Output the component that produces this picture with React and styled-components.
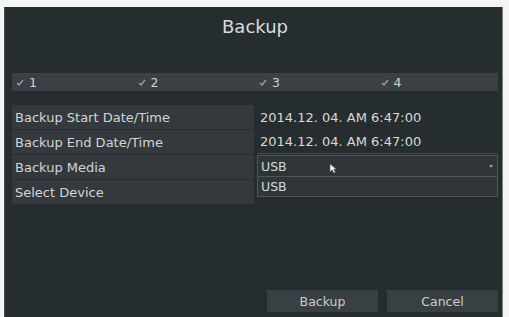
import React from "react";
import styled, { createGlobalStyle } from "styled-components";

const GlobalStyle = createGlobalStyle`
  html, body {
    margin: 0;
    padding: 0;
    background: #f3f4f3;
    font-family: "DejaVu Sans", "Liberation Sans", sans-serif;
  }
`;

const Page = styled.div`
  width: 509px;
  height: 317px;
  padding: 7px 6px 0 4px;
  box-sizing: border-box;
  overflow: hidden;
`;

const Panel = styled.div`
  height: 310px;
  background: #262d2f;
  border-left: 1px solid #4a5052;
  border-right: 1px solid #7a7f80;
  box-sizing: border-box;
  padding: 0 4px 0 7px;
  display: flex;
  flex-direction: column;
`;

const Title = styled.div`
  height: 40px;
  line-height: 40px;
  text-align: center;
  color: #d8dcdc;
  font-size: 18px;
  margin-bottom: 26px;
`;

const TabBar = styled.div`
  display: grid;
  grid-template-columns: repeat(4, 1fr);
  height: 18px;
  background: #3a4043;
  margin-bottom: 14px;
`;

const Tab = styled.div`
  display: flex;
  align-items: center;
  gap: 5px;
  padding-left: 4px;
  color: #cfd3d3;
  font-size: 12.5px;
  svg {
    color: #9aa0a0;
  }
`;

const Rows = styled.div`
  display: grid;
  grid-template-columns: 242px 1fr;
  grid-auto-rows: 24px;
  column-gap: 3px;
  row-gap: 1px;
`;

const Label = styled.div`
  display: flex;
  align-items: center;
  padding-left: 3px;
  background: #33393c;
  color: #d2d6d6;
  font-size: 13px;
  white-space: nowrap;
`;

const Value = styled.div`
  display: flex;
  align-items: center;
  padding-left: 3px;
  color: #d6dada;
  font-size: 13px;
  white-space: nowrap;
  border-bottom: ${p => (p.$line ? "1px solid #3d4a52" : "none")};
  box-sizing: border-box;
`;

const Select = styled.div`
  position: relative;
`;

const SelectBox = styled.div`
  height: 22px;
  display: flex;
  align-items: center;
  justify-content: space-between;
  padding: 0 4px 0 3px;
  border: 1px solid #4d5558;
  background: #2e3437;
  color: #d6dada;
  font-size: 12.5px;
  box-sizing: border-box;
`;

const OptionList = styled.div`
  position: absolute;
  left: 0;
  right: 0;
  top: 22px;
  z-index: 2;
`;

const Option = styled.div`
  height: 20px;
  display: flex;
  align-items: center;
  padding-left: 3px;
  border: 1px solid #4d5558;
  border-top: none;
  background: #2f3538;
  color: #d6dada;
  font-size: 12.5px;
  box-sizing: border-box;
`;

const Cursor = styled.svg`
  position: absolute;
  left: 72px;
  top: 8px;
  z-index: 3;
`;

const Arrow = styled.span`
  width: 0;
  height: 0;
  border-left: 2px solid transparent;
  border-right: 2px solid transparent;
  border-top: 3px solid #9aa0a0;
`;

const Spacer = styled.div`
  flex: 1;
`;

const Buttons = styled.div`
  display: flex;
  justify-content: flex-end;
  gap: 9px;
  margin-bottom: 5px;
`;

const Button = styled.div`
  width: 111px;
  height: 22px;
  display: flex;
  align-items: center;
  justify-content: center;
  background: #394043;
  color: #c8cccc;
  font-size: 12.5px;
`;

const CheckMark = () => (
  <svg width="8" height="7" viewBox="0 0 8 7">
    <path d="M1 4 L3 6 L7 1" stroke="currentColor" strokeWidth="1.4" fill="none" />
  </svg>
);

const tabs = ["1", "2", "3", "4"];

export default function App() {
  return (
    <>
      <GlobalStyle />
      <Page>
        <Panel>
          <Title>Backup</Title>
          <TabBar>
            {tabs.map(t => (
              <Tab key={t}>
                <CheckMark />
                {t}
              </Tab>
            ))}
          </TabBar>
          <Rows>
            <Label>Backup Start Date/Time</Label>
            <Value>2014.12. 04. AM 6:47:00</Value>
            <Label>Backup End Date/Time</Label>
            <Value $line>2014.12. 04. AM 6:47:00</Value>
            <Label>Backup Media</Label>
            <Select>
              <SelectBox>
                USB
                <Arrow />
              </SelectBox>
              <OptionList>
                <Option>USB</Option>
              </OptionList>
              <Cursor width="9" height="11" viewBox="0 0 9 11">
                <path d="M1 1 L1 9 L3 7 L5 10 L6.5 9.3 L4.6 6.3 L7.5 6.3 Z" fill="#f2f2f2" stroke="#555" strokeWidth="0.6" />
              </Cursor>
            </Select>
            <Label>Select Device</Label>
            <div />
          </Rows>
          <Spacer />
          <Buttons>
            <Button>Backup</Button>
            <Button>Cancel</Button>
          </Buttons>
        </Panel>
      </Page>
    </>
  );
}
